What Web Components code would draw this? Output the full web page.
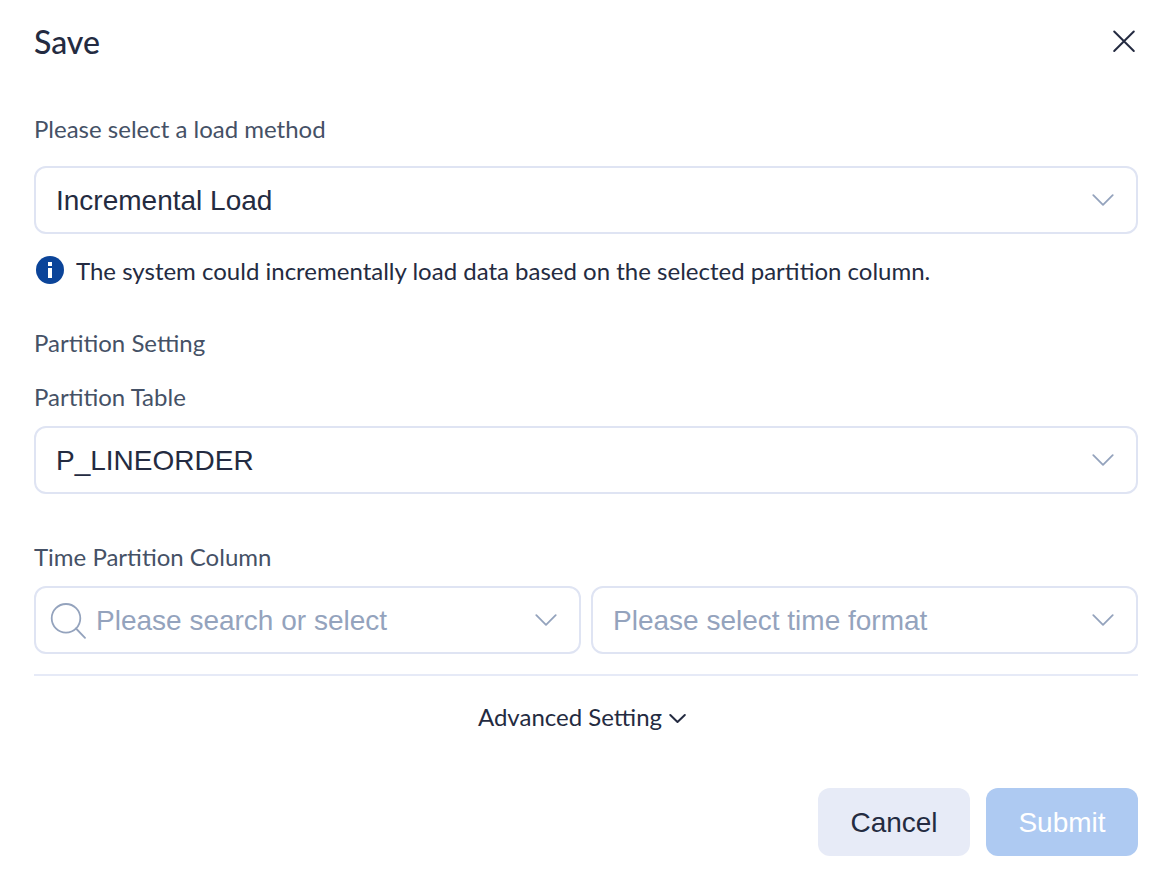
<!DOCTYPE html>
<html lang="en">
<head>
<meta charset="utf-8">
<title>Save</title>
<style>
  body {
    margin: 0;
    background: #fff;
    color: #242b41;
    font: 24px/36px Lato, "Liberation Sans", sans-serif;
  }
</style>
</head>
<body>
<save-dialog></save-dialog>

<template id="save-dialog">
  <style>
    :host { display: block; padding: 23px 30px 30px 34px; }
    header { display: flex; align-items: center; justify-content: space-between; height: 38px; }
    h1 { margin: 0; font-size: 32px; font-weight: 500; line-height: 38px; }
    .close { display: flex; padding: 4px 2px 6px; border: 0; background: none; color: inherit; }
    .method { margin-top: 50px; --label-gap: 19px; }
    info-note { margin-top: 19px; }
    h2 { margin: 36px 0 0; font-size: 24px; font-weight: 400; line-height: 36px; color: #455166; }
    .table { margin-top: 18px; }
    .columns { display: grid; grid-template-columns: 1fr 1fr; gap: 10px; align-items: end; margin-top: 45px; }
    hr { margin: 20px 0 0; border: 0; border-top: 2px solid #e6eaf7; }
    .advanced {
      display: flex; align-items: center; gap: 6px; margin: 23px auto 0; padding: 0 8px 0 0;
      border: 0; background: none; color: inherit; font: inherit;
    }
    footer { display: flex; justify-content: flex-end; gap: 16px; margin-top: 53px; }
  </style>
  <header>
    <h1>Save</h1>
    <button class="close" type="button" aria-label="Close">
      <svg width="24" height="24" viewBox="0 0 24 24" fill="none" stroke="currentColor" stroke-width="2" stroke-linecap="round"><path d="M2.2 2.5 21.8 22M21.8 2.5 2.2 22"/></svg>
    </button>
  </header>
  <select-field class="method" label="Please select a load method" value="Incremental Load"></select-field>
  <info-note>The system could incrementally load data based on the selected partition column.</info-note>
  <h2>Partition Setting</h2>
  <select-field class="table" label="Partition Table" value="P_LINEORDER"></select-field>
  <div class="columns">
    <search-field label="Time Partition Column" placeholder="Please search or select"></search-field>
    <select-field hint="Time format" placeholder="Please select time format"></select-field>
  </div>
  <hr>
  <button class="advanced" type="button" aria-expanded="false">
    <span>Advanced Setting</span>
    <svg width="18" height="14" viewBox="0 0 18 14" fill="none" stroke="currentColor" stroke-width="2" stroke-linecap="round" stroke-linejoin="round"><path d="M2.3 5 9.5 12 16.8 5"/></svg>
  </button>
  <footer>
    <action-button>Cancel</action-button>
    <action-button primary>Submit</action-button>
  </footer>
</template>

<template id="field-style">
  <style>
    :host { display: block; min-width: 0; }
    label { display: block; margin-bottom: var(--label-gap, 11px); color: #455166; }
    label:empty { display: none; }
    .box { display: grid; align-items: center; }
    .box > * { grid-area: 1 / 1; }
    select, input {
      box-sizing: border-box; width: 100%; height: 68px; margin: 0; padding: 2px 64px 0 20px;
      border: 2px solid #dfe4f3; border-radius: 12px; outline: 0; background: #fff; color: #242b41;
      font: 28px/36px "Liberation Sans", Arial, sans-serif; appearance: none;
    }
    select.empty { color: #94a3bd; }
    input { padding-left: 60px; }
    input::placeholder { color: #94a3bd; opacity: 1; }
    svg { pointer-events: none; fill: none; stroke: #94a3bd; stroke-width: 1.8; stroke-linecap: round; stroke-linejoin: round; }
    .arrow { justify-self: end; margin-right: 24px; }
    .lens { margin-left: 16px; }
  </style>
</template>

<template id="select-field">
  <label for="control"></label>
  <div class="box">
    <select id="control"><option></option></select>
    <svg class="arrow" width="22" height="12" viewBox="0 0 22 12"><path d="M1.3 1.2 11 10.8 20.7 1.2"/></svg>
  </div>
</template>

<template id="search-field">
  <label for="control"></label>
  <div class="box">
    <input id="control" type="text">
    <svg class="lens" width="36" height="38" viewBox="0 0 36 38"><circle cx="16" cy="17.3" r="14.3"/><path d="M26 27.5 35 36.8"/></svg>
    <svg class="arrow" width="22" height="12" viewBox="0 0 22 12"><path d="M1.3 1.2 11 10.8 20.7 1.2"/></svg>
  </div>
</template>

<template id="info-note">
  <style>
    :host { display: flex; align-items: center; gap: 12px; padding-left: 2px; }
    svg { flex: none; margin-bottom: 2px; }
    p { margin: 0; }
  </style>
  <svg width="28" height="28" viewBox="0 0 28 28"><circle cx="14" cy="14" r="14" fill="#0b4499"/><path d="M12 6h4v4h-4zM12 12h4v10h-4z" fill="#fff"/></svg>
  <p><slot></slot></p>
</template>

<template id="action-button">
  <style>
    :host { display: block; }
    button {
      min-width: 152px; height: 68px; padding: 2px 32px 0; border: 0; border-radius: 12px;
      background: #e7ebf7; color: #242b41; font: 28px/36px "Liberation Sans", Arial, sans-serif;
    }
    :host([primary]) button { background: #aecaf2; color: #fff; }
  </style>
  <button type="button"><slot></slot></button>
</template>

<script>
  const copy = id => document.getElementById(id).content.cloneNode(true);

  class TemplateElement extends HTMLElement {
    constructor() {
      super();
      this.attachShadow({ mode: "open" }).append(copy(this.localName));
    }
  }

  class FieldElement extends TemplateElement {
    connectedCallback() {
      this.shadowRoot.prepend(copy("field-style"));
      this.control = this.shadowRoot.getElementById("control");
      const label = this.getAttribute("label");
      if (label) this.shadowRoot.querySelector("label").textContent = label;
      else this.control.setAttribute("aria-label", this.getAttribute("hint"));
    }
  }

  customElements.define("select-field", class extends FieldElement {
    connectedCallback() {
      super.connectedCallback();
      const value = this.getAttribute("value");
      this.control.options[0].textContent = value || this.getAttribute("placeholder");
      this.control.classList.toggle("empty", !value);
    }
  });
  customElements.define("search-field", class extends FieldElement {
    connectedCallback() {
      super.connectedCallback();
      this.control.placeholder = this.getAttribute("placeholder");
    }
  });
  customElements.define("info-note", class extends TemplateElement {});
  customElements.define("action-button", class extends TemplateElement {
    connectedCallback() {
      this.shadowRoot.querySelector("button").disabled = this.hasAttribute("primary");
    }
  });
  customElements.define("save-dialog", class extends TemplateElement {});
</script>
</body>
</html>
